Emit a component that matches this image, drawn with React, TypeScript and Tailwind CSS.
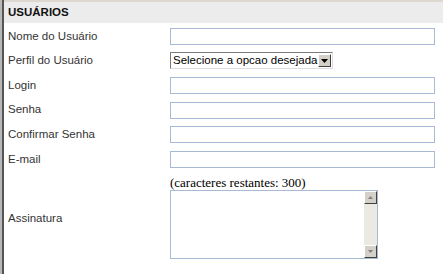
import React from "react";

const labelCls = "w-[166px] shrink-0 pl-[4px] text-[11.5px] text-[#333] font-['Liberation_Sans',Arial,sans-serif]";
const inputCls = "h-[17px] w-[265px] border border-[#a7b9d3] bg-white";

function Row({ label, children }: { label: string; children: React.ReactNode }) {
  return (
    <div className="flex items-center h-[24.6px]">
      <div className={labelCls}>{label}</div>
      {children}
    </div>
  );
}

export default function App() {
  return (
    <div className="w-[443px] h-[274px] bg-white overflow-hidden flex">
      <div className="w-[2px] bg-[#b8b8b8]" />
      <div className="w-[2px] bg-[#555]" />
      <div className="flex-1 flex flex-col">
        <div className="h-[2px] bg-[#ddd8cf]" />
        <div className="h-[21px] bg-[#ececec] flex items-center pl-[4px] text-[11.5px] font-bold text-[#111] font-['Liberation_Sans',Arial,sans-serif]">
          USUÁRIOS
        </div>
        <div className="flex flex-col pt-[1px]">
          <Row label="Nome do Usuário">
            <div className={inputCls} />
          </Row>
          <Row label="Perfil do Usuário">
            <div className="h-[17px] w-[163px] border border-[#7a7a7a] border-r-[#ddd] border-b-[#ddd] bg-white flex items-center">
              <span className="pl-[2px] flex-1 text-[11.5px] leading-none text-black font-['Liberation_Sans',Arial,sans-serif] whitespace-nowrap">
                Selecione a opcao desejada
              </span>
              <div className="w-[13px] h-[13px] mr-[1px] bg-[#d4d0c8] border border-[#fff] border-r-[#404040] border-b-[#404040] flex items-center justify-center">
                <svg width="7" height="4" viewBox="0 0 7 4"><path d="M0 0h7L3.5 4z" fill="#000" /></svg>
              </div>
            </div>
          </Row>
          <Row label="Login">
            <div className={inputCls} />
          </Row>
          <Row label="Senha">
            <div className={inputCls} />
          </Row>
          <Row label="Confirmar Senha">
            <div className={inputCls} />
          </Row>
          <Row label="E-mail">
            <div className={inputCls} />
          </Row>
          <div className="flex items-center mt-[3px]">
            <div className={labelCls + " pt-[4px]"}>Assinatura</div>
            <div className="flex flex-col">
              <div className="text-[13px] leading-[15px] text-black font-['Liberation_Serif','Times_New_Roman',serif] whitespace-nowrap">
                (caracteres restantes: 300)
              </div>
              <div className="h-[69px] w-[208px] border border-[#a7b9d3] bg-white flex justify-end">
                <div className="w-[13px] h-full bg-[#ebe9e3] flex flex-col justify-between">
                  <div className="h-[13px] bg-[#d4d0c8] border border-[#fff] border-r-[#404040] border-b-[#404040] flex items-center justify-center">
                    <svg width="5" height="3" viewBox="0 0 5 3"><path d="M0 3h5L2.5 0z" fill="#808080" /></svg>
                  </div>
                  <div className="h-[13px] bg-[#d4d0c8] border border-[#fff] border-r-[#404040] border-b-[#404040] flex items-center justify-center">
                    <svg width="5" height="3" viewBox="0 0 5 3"><path d="M0 0h5L2.5 3z" fill="#808080" /></svg>
                  </div>
                </div>
              </div>
            </div>
          </div>
        </div>
      </div>
    </div>
  );
}
